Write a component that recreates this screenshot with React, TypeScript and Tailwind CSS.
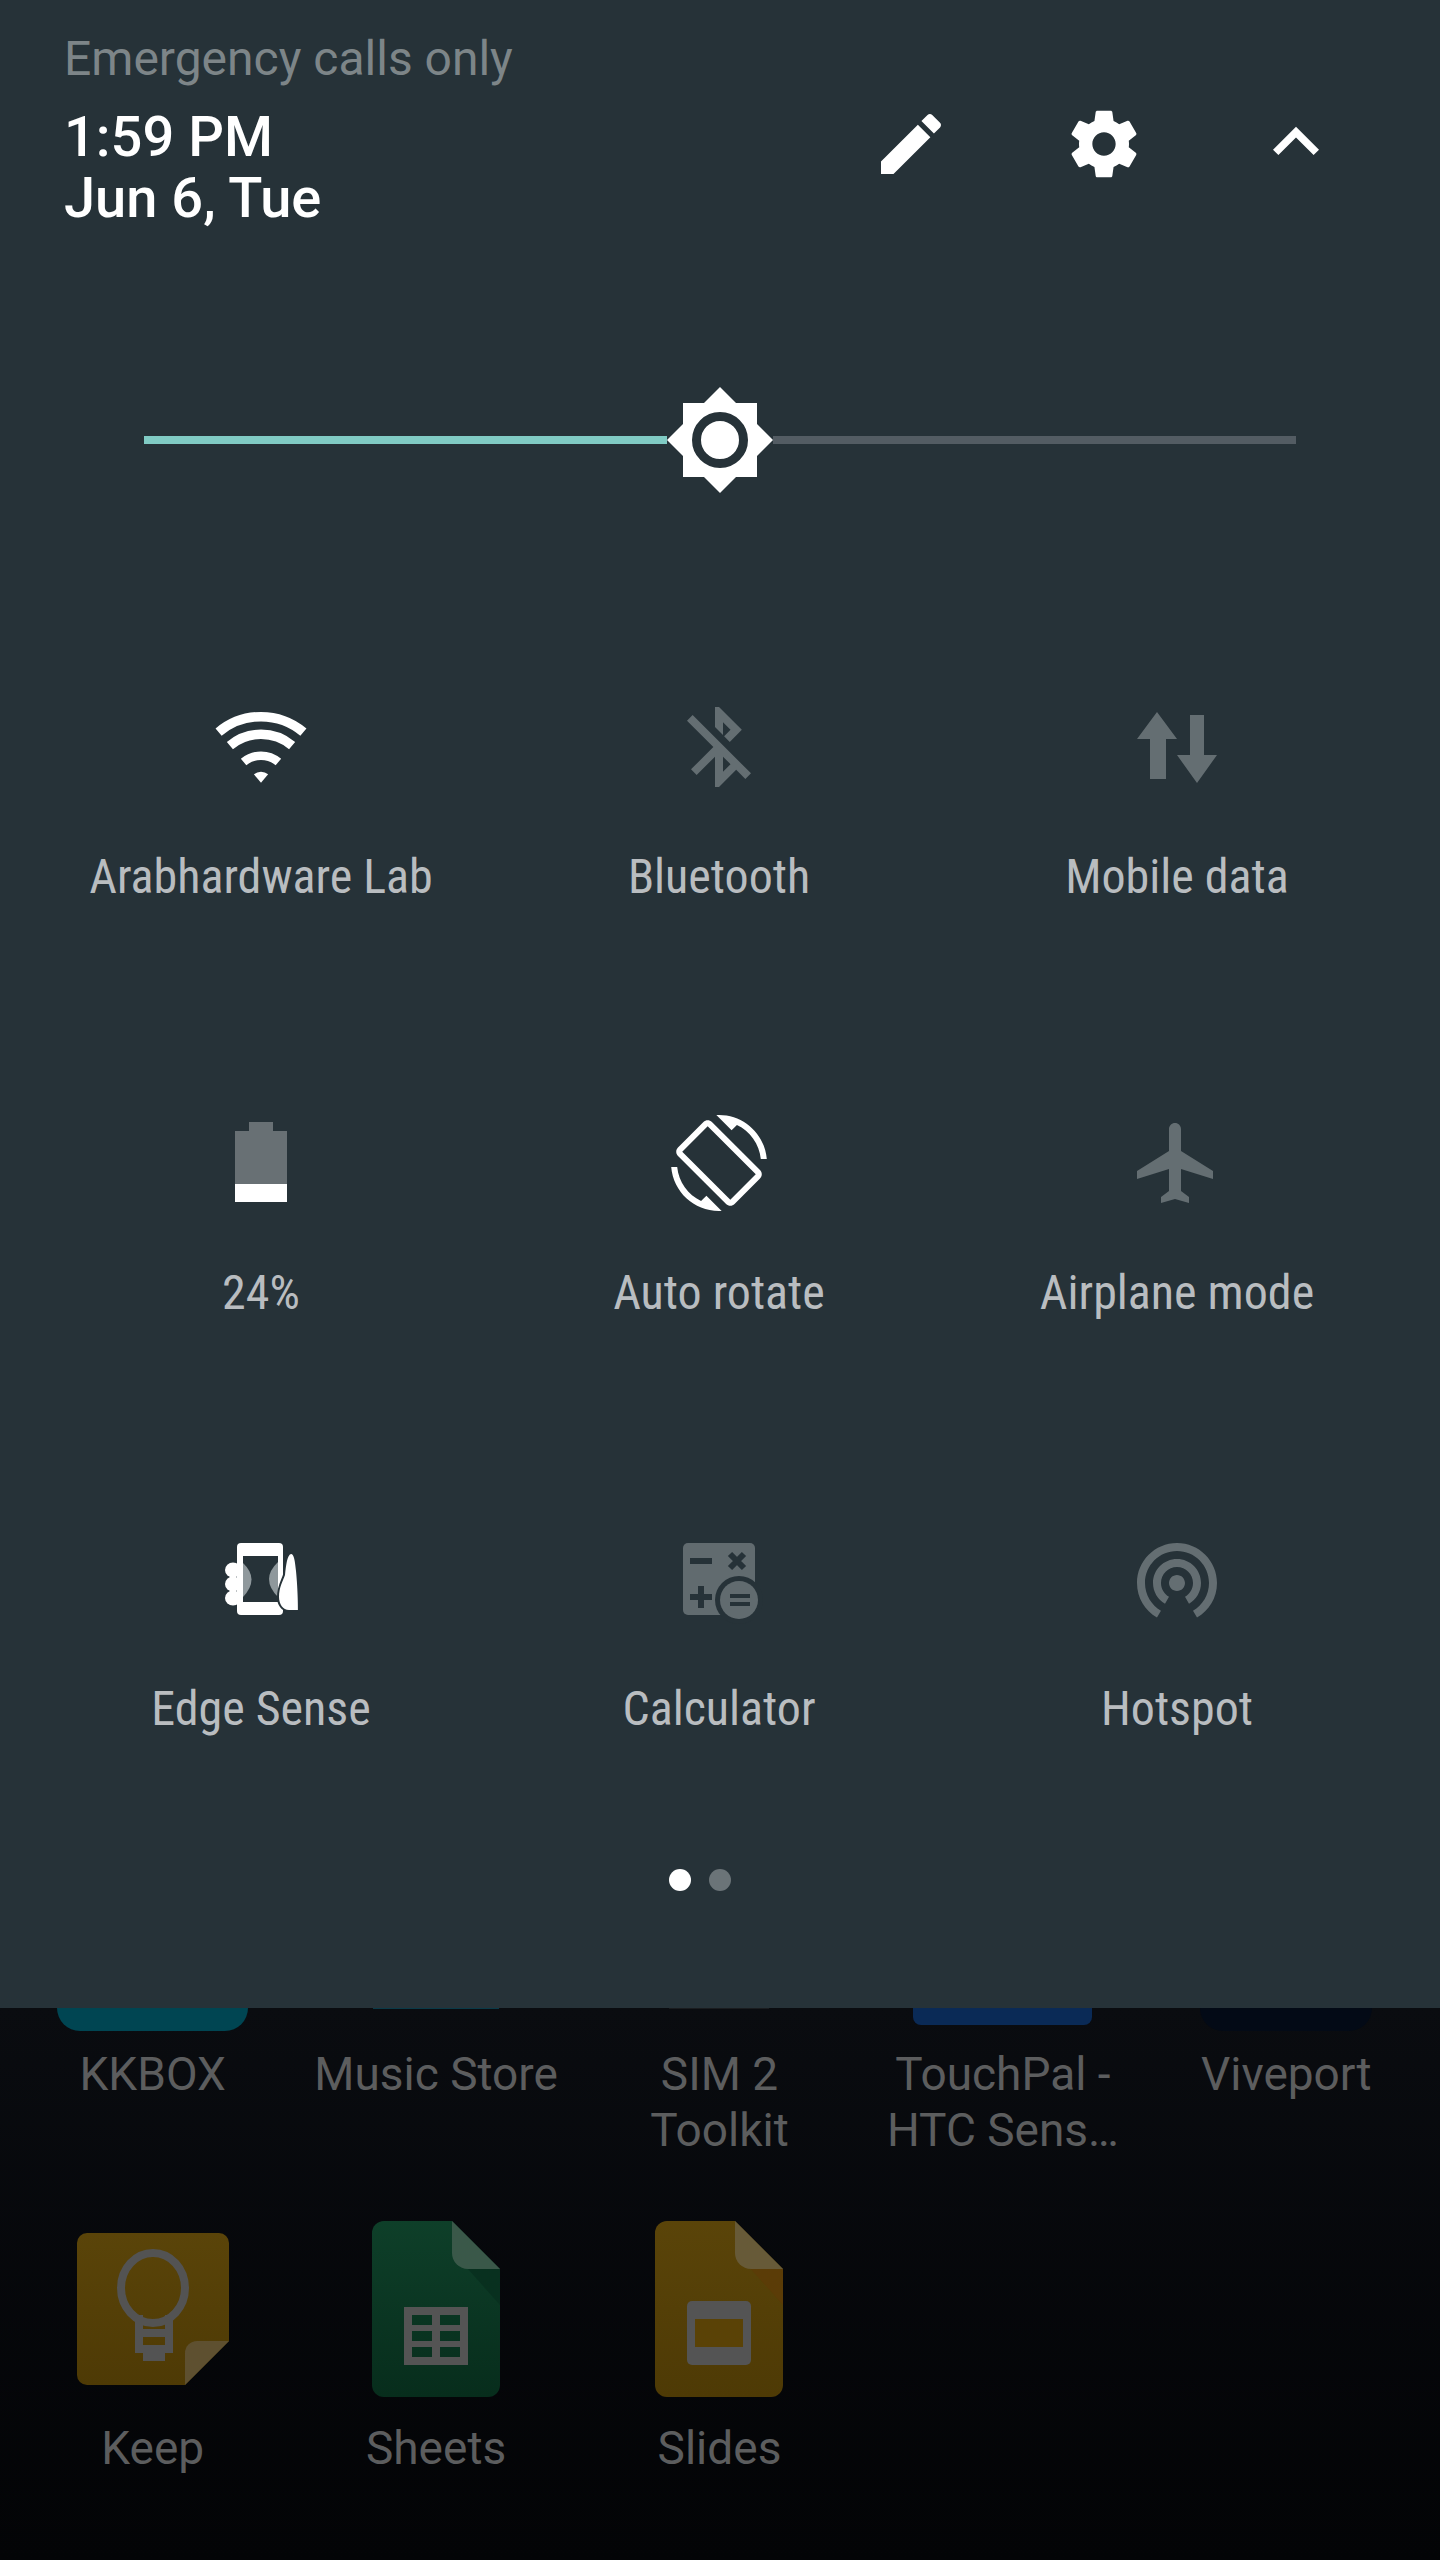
import React from 'react';

const ON = '#ffffff';
const OFF = '#646e72';
const PANEL = '#263238';

const IconBox: React.FC<{ children: React.ReactNode }> = ({ children }) => (
  <svg viewBox="0 0 96 96" className="w-[96px] h-[96px]">
    {children}
  </svg>
);

const MaterialIcon: React.FC<{ d: string; fill: string }> = ({ d, fill }) => (
  <svg viewBox="0 0 24 24" className="w-[96px] h-[96px]">
    <path d={d} fill={fill} />
  </svg>
);

const WifiIcon = () => (
  <svg viewBox="1 0 120 95" className="w-[120px] h-[95px] mt-[1px]">
    <g fill="none" stroke={ON}>
      <path d="M18.6 32.1A66 66 0 0 1 103.4 32.1" strokeWidth="9.5" />
      <path d="M29.9 45.6A48.4 48.4 0 0 1 92.1 45.6" strokeWidth="9.5" />
      <path d="M43.6 62A27 27 0 0 1 78.4 62" strokeWidth="8.5" />
    </g>
    <path d="M61 82.7L53.9 74.3A11 11 0 0 1 68.1 74.3Z" fill={ON} />
  </svg>
);

const DataIcon = () => (
  <IconBox>
    <path d="M28 13L48 40H37V80H21V40H8Z" fill={OFF} />
    <path d="M61 16H75V56H88L68 84L48 56H61Z" fill={OFF} />
  </IconBox>
);

const BatteryIcon = () => (
  <IconBox>
    <path d="M36 7H60V16H74V69H22V16H36Z" fill="#687074" />
    <rect x="22" y="69" width="52" height="18" fill={ON} />
  </IconBox>
);

const EdgeIcon = () => (
  <IconBox>
    <ellipse cx="20" cy="39" rx="8" ry="7.5" fill={ON} />
    <ellipse cx="20" cy="53" rx="8" ry="7.5" fill={ON} />
    <ellipse cx="20" cy="67" rx="8" ry="7.5" fill={ON} />
    <rect x="24" y="12" width="46" height="72" rx="4" fill={ON} />
    <rect x="30" y="25" width="35" height="46" fill={PANEL} />
    <path d="M30 32Q47 48 30 66Z" fill="#8f989c" />
    <path d="M65 31Q47 48 65 66Z" fill="#8f989c" />
    <path
      d="M78 23C74 24 73 35 72 44C70 50 66 56 66 66C66 73 70 79 76 79L85 79C85 79 85 60 83 40C82 30 81 23 78 23Z"
      fill={ON}
      stroke={PANEL}
      strokeWidth="4"
      paintOrder="stroke"
    />
  </IconBox>
);

const CalculatorIcon = () => (
  <IconBox>
    <rect x="12" y="12" width="72" height="72" rx="5" fill="#616b6f" />
    <rect x="19" y="27" width="22" height="6" fill={PANEL} />
    <path d="M59 23L73 37M73 23L59 37" stroke={PANEL} strokeWidth="6" />
    <path d="M19 66H41M30 55V77" stroke={PANEL} strokeWidth="6" />
    <circle cx="68" cy="69" r="24" fill={PANEL} />
    <circle cx="68" cy="69" r="19" fill="#616b6f" />
    <rect x="59" y="63" width="20" height="4" fill={PANEL} />
    <rect x="59" y="71" width="20" height="4" fill={PANEL} />
  </IconBox>
);

const tiles: { label: string; icon: React.ReactNode }[] = [
  { label: 'Arabhardware Lab', icon: <WifiIcon /> },
  {
    label: 'Bluetooth',
    icon: (
      <MaterialIcon
        fill={OFF}
        d="M13 5.83l1.88 1.88-1.6 1.6 1.41 1.41 3.02-3.02L12 2h-1v5.03l2 2v-3.2zM5.41 4L4 5.41 10.59 12 5 17.59 6.41 19 11 14.41V22h1l4.29-4.29 2.3 2.3L20 18.59 5.41 4zM13 18.17v-3.76l1.88 1.88L13 18.17z"
      />
    ),
  },
  { label: 'Mobile data', icon: <DataIcon /> },
  { label: '24%', icon: <BatteryIcon /> },
  {
    label: 'Auto rotate',
    icon: (
      <MaterialIcon
        fill={ON}
        d="M16.48 2.52c3.27 1.55 5.61 4.72 5.97 8.48h1.5C23.44 4.84 18.29 0 12 0l-.66.03 3.81 3.81 1.33-1.32zm-6.25-.77c-.59-.59-1.54-.59-2.12 0L1.75 8.11c-.59.59-.59 1.54 0 2.12l12.02 12.02c.59.59 1.54.59 2.12 0l6.36-6.36c.59-.59.59-1.54 0-2.12L10.23 1.75zm4.6 19.44L2.81 9.17l6.36-6.36 12.02 12.02-6.36 6.36zm-7.31.29C4.25 19.94 1.91 16.76 1.55 13H.05C.56 19.16 5.71 24 12 24l.66-.03-3.81-3.81-1.33 1.32z"
      />
    ),
  },
  {
    label: 'Airplane mode',
    icon: (
      <MaterialIcon
        fill={OFF}
        d="M21 16v-2l-8-5V3.5c0-.83-.67-1.5-1.5-1.5S10 2.67 10 3.5V9l-8 5v2l8-2.5V19l-2 1.5V22l3.5-1 3.5 1v-1.5L13 19v-5.5l8 2.5z"
      />
    ),
  },
  { label: 'Edge Sense', icon: <EdgeIcon /> },
  { label: 'Calculator', icon: <CalculatorIcon /> },
  {
    label: 'Hotspot',
    icon: (
      <MaterialIcon
        fill={OFF}
        d="M12 11c-1.1 0-2 .9-2 2s.9 2 2 2 2-.9 2-2-.9-2-2-2zm6 2c0-3.31-2.69-6-6-6s-6 2.69-6 6c0 2.22 1.21 4.15 3 5.19l1-1.74c-1.19-.7-2-1.97-2-3.45 0-2.21 1.79-4 4-4s4 1.79 4 4c0 1.48-.81 2.75-2 3.45l1 1.74c1.79-1.04 3-2.97 3-5.19zM12 3C6.48 3 2 7.48 2 13c0 3.7 2.01 6.92 4.99 8.65l1-1.73C5.61 18.53 4 15.96 4 13c0-4.42 3.58-8 8-8s8 3.58 8 8c0 2.96-1.61 5.53-4 6.92l1 1.73c2.99-1.73 5-4.95 5-8.65 0-5.52-4.48-10-10-10z"
      />
    ),
  },
];

const KeepLogo = () => (
  <svg viewBox="0 0 152 152" className="w-[152px] h-[152px] mb-[12px]">
    <defs>
      <linearGradient id="keepBody" x1="0" y1="0" x2="0" y2="1">
        <stop offset="0" stopColor="#5a4409" />
        <stop offset="1" stopColor="#4e3a05" />
      </linearGradient>
    </defs>
    <path d="M10 0H142A10 10 0 0 1 152 10V108L108 152H10A10 10 0 0 1 0 142V10A10 10 0 0 1 10 0Z" fill="url(#keepBody)" />
    <path d="M152 108H120A12 12 0 0 0 108 120V152Z" fill="#5e5030" />
    <ellipse cx="76" cy="55" rx="32" ry="35" fill="none" stroke="#535353" strokeWidth="8" />
    <path d="M58 82H66V96H88V82H96V120H88V128H66V120H58ZM66 104V112H88V104Z" fill="#535353" fillRule="evenodd" />
    <rect x="58" y="96" width="38" height="8" fill="#535353" />
  </svg>
);

const DocShape: React.FC<{ id: string; top: string; bottom: string; fold: string; shade: string; children: React.ReactNode }> = ({
  id,
  top,
  bottom,
  fold,
  shade,
  children,
}) => (
  <svg viewBox="0 0 128 176" className="w-[128px] h-[176px]">
    <defs>
      <linearGradient id={id} x1="0" y1="0" x2="0" y2="1">
        <stop offset="0" stopColor={top} />
        <stop offset="1" stopColor={bottom} />
      </linearGradient>
    </defs>
    <path d="M12 0H80L128 48V164A12 12 0 0 1 116 176H12A12 12 0 0 1 0 164V12A12 12 0 0 1 12 0Z" fill={`url(#${id})`} />
    <path d="M96 48H128V84Z" fill={shade} />
    <path d="M80 0L128 48H96A16 16 0 0 1 80 32Z" fill={fold} />
    {children}
  </svg>
);

const SheetsLogo = () => (
  <DocShape id="sheetsBody" top="#0e3f29" bottom="#072d1c" fold="#3a5849" shade="#08301f">
    <path
      fillRule="evenodd"
      fill="#545454"
      d="M32 86H96V144H32ZM40 94V104H60V94ZM68 94V104H88V94ZM40 110V120H60V110ZM68 110V120H88V110ZM40 126V136H60V126ZM68 126V136H88V126Z"
    />
  </DocShape>
);

const SlidesLogo = () => (
  <DocShape id="slidesBody" top="#5a4409" bottom="#4e3a05" fold="#675a38" shade="#5b3c07">
    <rect x="32" y="80" width="64" height="64" rx="5" fill="#545454" />
    <rect x="40" y="98" width="48" height="28" fill="#5a4206" />
  </DocShape>
);

const appsTop = [
  { label: 'KKBOX', stub: 'w-[191px] h-[23px] bg-[#004552] rounded-b-[24px]' },
  { label: 'Music Store', stub: 'w-[126px] h-[1px] bg-[#0a3a48]' },
  { label: 'SIM 2\nToolkit', stub: 'w-[100px] h-[1px] bg-[#1a1c1f]' },
  { label: 'TouchPal -\nHTC Sens…', stub: 'w-[179px] h-[17px] bg-[#0a2a56] rounded-b-[8px]' },
  { label: 'Viveport', stub: 'w-[172px] h-[23px] bg-[#030a16] rounded-b-[24px]' },
];

const appsBottom = [
  { label: 'Keep', logo: <KeepLogo /> },
  { label: 'Sheets', logo: <SheetsLogo /> },
  { label: 'Slides', logo: <SlidesLogo /> },
];

export default function App() {
  return (
    <div className="w-[1440px] h-[2560px] flex flex-col font-[Roboto,sans-serif] overflow-hidden">
      {/* quick settings panel */}
      <div className="h-[2008px] shrink-0 bg-[#263238] pt-[31px]">
        <div className="pl-[64px] text-[48px] leading-[56px] text-[#7d8588]">Emergency calls only</div>
        <div className="mt-[20px] pl-[64px] pr-[48px] flex justify-between items-start">
          <div className="text-[56px] leading-[61px] font-medium text-white">
            <div>1:59 PM</div>
            <div>Jun 6, Tue</div>
          </div>
          <div className="flex -mt-[3px]">
            <div className="w-[193px] h-[80px] flex items-center justify-center">
              <svg viewBox="0 0 24 24" className="w-[80px] h-[80px]">
                <path
                  fill="#fff"
                  d="M3 17.25V21h3.75L17.81 9.94l-3.75-3.75L3 17.25zM20.71 7.04c.39-.39.39-1.02 0-1.41l-2.34-2.34c-.39-.39-1.02-.39-1.41 0l-1.83 1.83 3.75 3.75 1.83-1.83z"
                />
              </svg>
            </div>
            <div className="w-[193px] h-[80px] flex items-center justify-center">
              <svg viewBox="0 0 24 24" className="w-[80px] h-[80px]">
                <path
                  fill="#fff"
                  d="M19.43 12.98c.04-.32.07-.64.07-.98s-.03-.66-.07-.98l2.11-1.65c.19-.15.24-.42.12-.64l-2-3.46c-.12-.22-.39-.3-.61-.22l-2.49 1c-.52-.4-1.08-.73-1.69-.98l-.38-2.65C14.46 2.18 14.25 2 14 2h-4c-.25 0-.46.18-.49.42l-.38 2.65c-.61.25-1.17.59-1.69.98l-2.49-1c-.23-.09-.49 0-.61.22l-2 3.46c-.13.22-.07.49.12.64l2.11 1.65c-.04.32-.07.65-.07.98s.03.66.07.98l-2.11 1.65c-.19.15-.24.42-.12.64l2 3.46c.12.22.39.3.61.22l2.49-1c.52.4 1.08.73 1.69.98l.38 2.65c.03.24.24.42.49.42h4c.25 0 .46-.18.49-.42l.38-2.65c.61-.25 1.17-.59 1.69-.98l2.49 1c.23.09.49 0 .61-.22l2-3.46c.12-.22.07-.49-.12-.64l-2.11-1.65zM12 15.5c-1.93 0-3.5-1.57-3.5-3.5s1.57-3.5 3.5-3.5 3.5 1.57 3.5 3.5-1.57 3.5-3.5 3.5z"
                />
              </svg>
            </div>
            <div className="w-[192px] h-[80px] flex items-center justify-center">
              <svg viewBox="0 0 24 24" className="w-[92px] h-[92px] -mt-[4px] shrink-0">
                <path fill="#fff" d="M12 8l-6 6 1.41 1.41L12 10.83l4.59 4.58L18 14z" />
              </svg>
            </div>
          </div>
        </div>

        {/* brightness */}
        <div className="mt-[158px] mx-[144px] h-[106px] flex items-center">
          <div className="flex-1 h-[8px] bg-[#80cbc4]" />
          <svg viewBox="0 0 106 106" className="w-[106px] h-[106px] shrink-0">
            <rect x="16" y="16" width="74" height="74" fill="#fff" />
            <path d="M53 0L106 53L53 106L0 53Z" fill="#fff" />
            <circle cx="53" cy="53" r="23.5" fill="none" stroke={PANEL} strokeWidth="9" />
          </svg>
          <div className="flex-1 h-[8px] bg-[#535c63]" />
        </div>

        {/* tiles */}
        <div className="mt-[206px] ml-[32px] w-[1374px] grid grid-cols-3 gap-y-[210px]">
          {tiles.map((t) => (
            <div key={t.label} className="flex flex-col items-center">
              {t.icon}
              <div className="mt-[54px] text-[48px] leading-[56px] text-[#b9bdc0] [font-stretch:condensed] whitespace-nowrap">
                {t.label}
              </div>
            </div>
          ))}
        </div>

        {/* pager dots */}
        <div className="mt-[132px] pr-[40px] flex justify-center gap-[18px]">
          <div className="w-[22px] h-[22px] rounded-full bg-white" />
          <div className="w-[22px] h-[22px] rounded-full bg-[#6b7478]" />
        </div>
      </div>

      {/* dimmed app drawer behind the panel */}
      <div className="flex-1 bg-gradient-to-b from-[#0a0c10] to-[#030406]">
        <div className="ml-[11px] w-[1417px] grid grid-cols-5 text-[46px] leading-[56px] text-[#5c5d5e] text-center">
          {appsTop.map((a) => (
            <div key={a.label} className="flex flex-col items-center h-[213px]">
              <div className="h-[38px]">
                <div className={a.stub} />
              </div>
              <div className="whitespace-pre-line">{a.label}</div>
            </div>
          ))}
          {appsBottom.map((a) => (
            <div key={a.label} className="flex flex-col items-center">
              <div className="h-[176px] flex items-end">{a.logo}</div>
              <div className="mt-[23px]">{a.label}</div>
            </div>
          ))}
        </div>
      </div>
    </div>
  );
}
